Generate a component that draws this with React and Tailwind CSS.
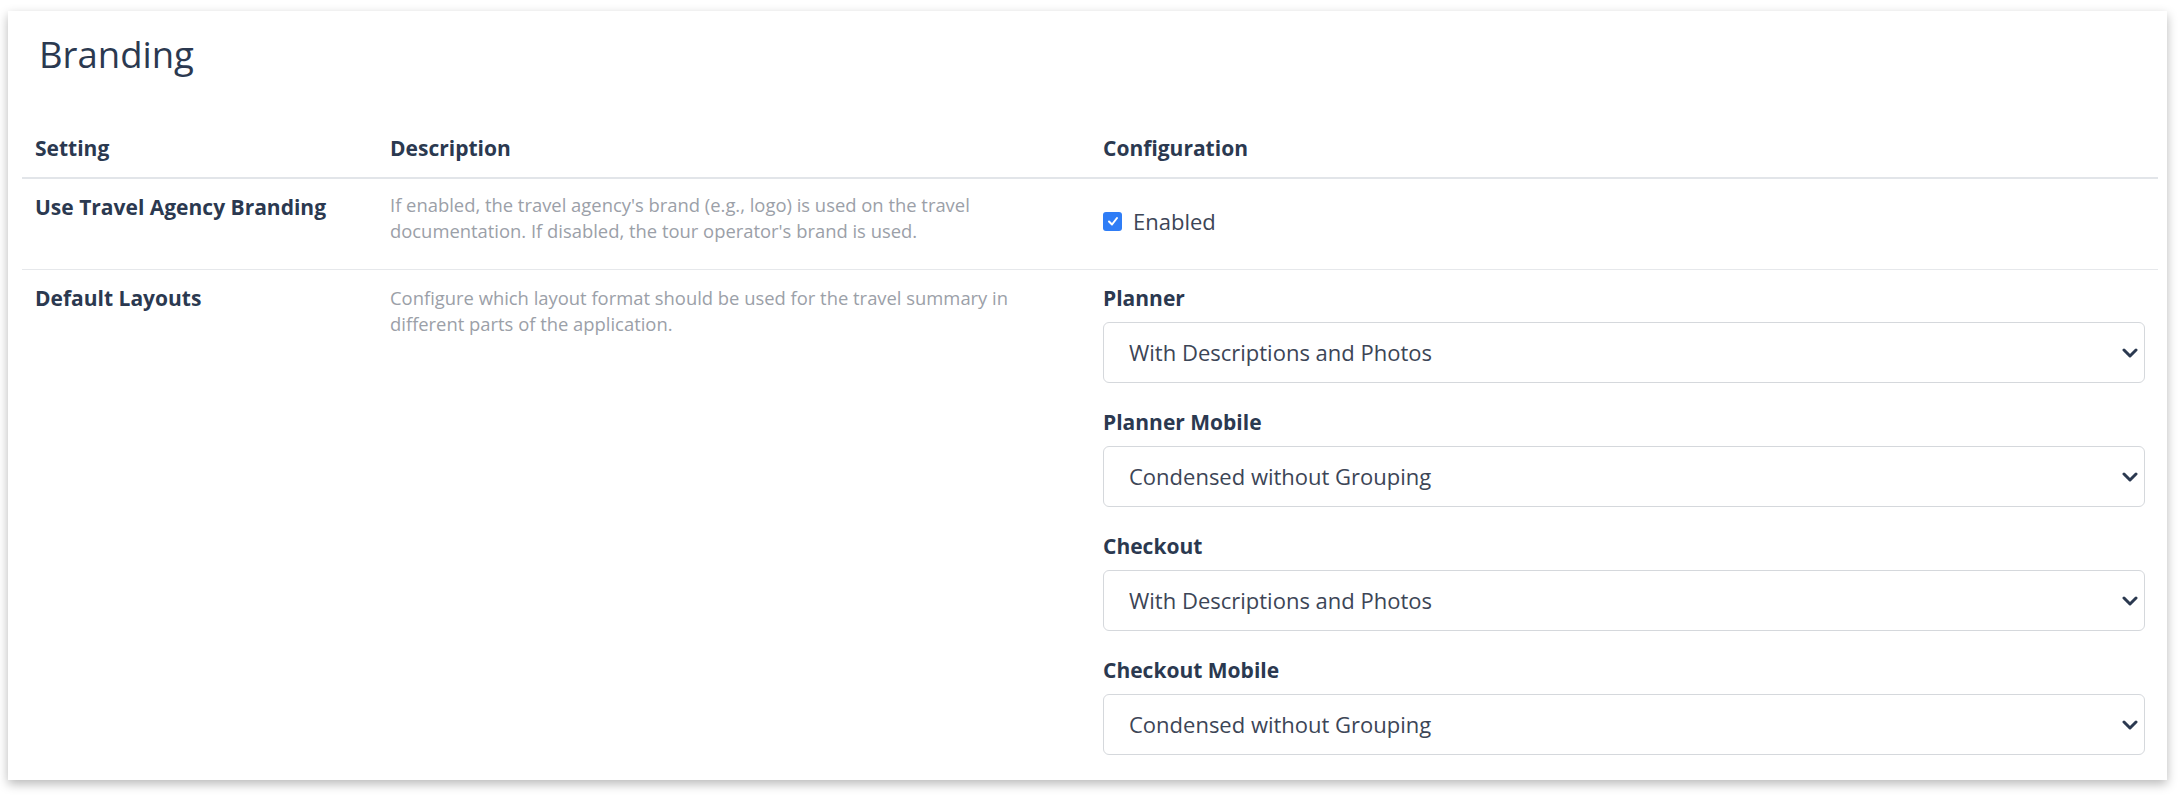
import { useState } from 'react';

const layoutOptions = ['With Descriptions and Photos', 'Condensed without Grouping', 'Condensed with Grouping'];

const defaultLayouts = [
  { key: 'planner', label: 'Planner', value: 'With Descriptions and Photos' },
  { key: 'plannerMobile', label: 'Planner Mobile', value: 'Condensed without Grouping' },
  { key: 'checkout', label: 'Checkout', value: 'With Descriptions and Photos' },
  { key: 'checkoutMobile', label: 'Checkout Mobile', value: 'Condensed without Grouping' },
];

function Chevron() {
  return (
    <svg viewBox="0 0 16 10" className="pointer-events-none absolute right-[7px] top-1/2 h-[10px] w-[16px] -translate-y-1/2" fill="none">
      <polyline points="2,2 8,8 14,2" stroke="#2b3950" strokeWidth="3" strokeLinecap="round" strokeLinejoin="round" />
    </svg>
  );
}

function LayoutSelect({ value, onChange }) {
  return (
    <div className="relative">
      <select
        value={value}
        onChange={e => onChange(e.target.value)}
        className="h-[61px] w-full appearance-none rounded-[6px] border border-[#d5d8dc] bg-white pl-[25px] text-[22px] text-[#3c4556] outline-none"
      >
        {layoutOptions.map(o => <option key={o} value={o}>{o}</option>)}
      </select>
      <Chevron />
    </div>
  );
}

export default function App() {
  const [enabled, setEnabled] = useState(true);
  const [layouts, setLayouts] = useState(
    Object.fromEntries(defaultLayouts.map(l => [l.key, l.value]))
  );

  return (
    <div className="min-h-screen bg-white pl-[8px] pt-[11px] font-['Open_Sans',sans-serif]">
      <div className="w-[2159px] bg-white pb-[12px] pt-[21px] shadow-[0_4px_10px_rgba(0,0,0,0.28)]">
        <h2 className="ml-[31px] text-[36.5px] leading-[44px] text-[#2b3950]">Branding</h2>

        <div className="ml-[14px] mr-[9px] mt-[44px]">
          {/* header */}
          <div className="grid grid-cols-[355px_713px_1fr] border-b-2 border-[#e2e5e9] text-[21px] font-bold leading-[30px] text-[#2b3950]">
            <div className="px-[13px] pb-[14px] pt-[13px]">Setting</div>
            <div className="px-[13px] pb-[14px] pt-[13px]">Description</div>
            <div className="px-[13px] pb-[14px] pt-[13px]">Configuration</div>
          </div>

          {/* travel agency branding */}
          <div className="grid h-[91px] grid-cols-[355px_713px_1fr] border-b border-[#e6e8eb]">
            <div className="px-[13px] pt-[13px] text-[21px] font-bold leading-[30px] text-[#2b3950]">Use Travel Agency Branding</div>
            <div className="px-[13px] pt-[13px] text-[18.4px] leading-[26px] text-[#9ba0a8]">
              If enabled, the travel agency's brand (e.g., logo) is used on the travel<br />
              documentation. If disabled, the tour operator's brand is used.
            </div>
            <div className="px-[13px] pt-[27px]">
              <label className="flex h-[30px] cursor-pointer items-center gap-[11px]" onClick={() => setEnabled(!enabled)}>
                <span className={`flex h-[19px] w-[19px] items-center justify-center rounded-[3px] ${enabled ? 'bg-[#2f7df6]' : 'border border-[#9ca3af] bg-white'}`}>
                  {enabled && (
                    <svg viewBox="0 0 12 12" className="h-[12px] w-[12px]" fill="none">
                      <polyline points="2,6.5 5,9.5 10,3" stroke="white" strokeWidth="2" strokeLinecap="round" strokeLinejoin="round" />
                    </svg>
                  )}
                </span>
                <span className="text-[22px] text-[#3c4556]">Enabled</span>
              </label>
            </div>
          </div>

          {/* default layouts */}
          <div className="grid grid-cols-[355px_713px_1fr]">
            <div className="px-[13px] pt-[13px] text-[21px] font-bold leading-[30px] text-[#2b3950]">Default Layouts</div>
            <div className="px-[13px] pt-[15px] text-[18.4px] leading-[26px] text-[#9ba0a8]">
              Configure which layout format should be used for the travel summary in<br />
              different parts of the application.
            </div>
            <div className="space-y-[24px] px-[13px] pb-[13px] pt-[13px]">
              {defaultLayouts.map(l => (
                <div key={l.key}>
                  <div className="mb-[9px] text-[21px] font-bold leading-[30px] text-[#2b3950]">{l.label}</div>
                  <LayoutSelect value={layouts[l.key]} onChange={v => setLayouts({ ...layouts, [l.key]: v })} />
                </div>
              ))}
            </div>
          </div>
        </div>
      </div>
    </div>
  );
}
